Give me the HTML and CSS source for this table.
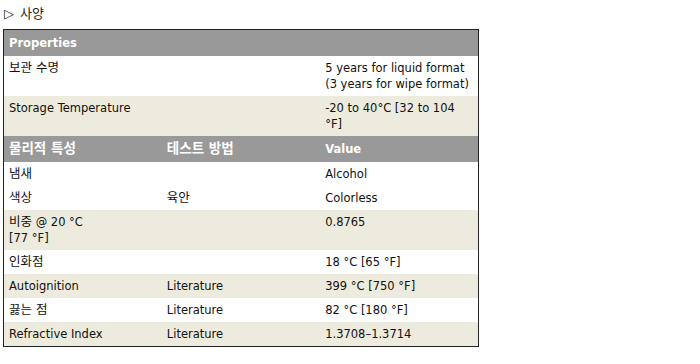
FILE: index.html
```html
<!DOCTYPE html>
<html lang="ko">
<head>
<meta charset="utf-8">
<title>사양</title>
<link rel="stylesheet" href="styles.css">
</head>
<body>
<div class="page">
  <h3 class="title"><span class="tri">▷</span><span class="ttext">사양</span></h3>
  <table class="spec">
    <colgroup><col class="c"><col class="c"><col class="c"></colgroup>
    <tr class="head"><th colspan="3">Properties</th></tr>
    <tr class="w"><td><span class="ko">보관 수명</span></td><td></td><td>5 years for liquid format (3 years for wipe format)</td></tr>
    <tr class="b"><td>Storage Temperature</td><td></td><td>-20 to 40°C [32 to 104<br>°F]</td></tr>
    <tr class="head"><th><span class="ko">물리적 특성</span></th><th><span class="ko">테스트 방법</span></th><th>Value</th></tr>
    <tr class="w"><td><span class="ko">냄새</span></td><td></td><td>Alcohol</td></tr>
    <tr class="w"><td><span class="ko">색상</span></td><td><span class="ko">육안</span></td><td>Colorless</td></tr>
    <tr class="b"><td><span class="ko">비중</span> @ 20 °C<br>[77 °F]</td><td></td><td>0.8765</td></tr>
    <tr class="w"><td><span class="ko">인화점</span></td><td></td><td>18 °C [65 °F]</td></tr>
    <tr class="b"><td>Autoignition</td><td>Literature</td><td>399 °C [750 °F]</td></tr>
    <tr class="w"><td><span class="ko">끓는 점</span></td><td>Literature</td><td>82 °C [180 °F]</td></tr>
    <tr class="b"><td>Refractive Index</td><td>Literature</td><td>1.3708–1.3714</td></tr>
  </table>
</div>
</body>
</html>
```
FILE: styles.css
```css
html, body { margin: 0; padding: 0; background: #fff; }
.page { padding: 0 0 0 3px; font-family: "DejaVu Sans", "Noto Sans CJK KR", sans-serif; color: #111; }
.title { margin: 0; padding: 6px 0 7px 1px; font-size: 13px; line-height: 16px; font-weight: normal; color: #222; display: flex; align-items: center; }
.tri { font-size: 13px; width: 16px; }
.ttext { font-size: 13px; }
.spec { border-collapse: collapse; border: 1px solid #222; width: 476px; table-layout: fixed; font-size: 11.5px; line-height: 16px; }
.spec .c { width: 158px; }
.spec th { background: #999999; color: #fff; text-align: left; font-weight: bold; font-size: 11.5px; padding: 5px 5px; line-height: 16px; }
.spec td { padding: 4px 5px; vertical-align: top; }
.spec .ko { line-height: 1; }
.spec td .ko { font-size: 12.5px; }
.spec th .ko { font-size: 13.5px; }
.spec tr.w td { background: #fff; }
.spec tr.b td { background: #edebdd; }
```
